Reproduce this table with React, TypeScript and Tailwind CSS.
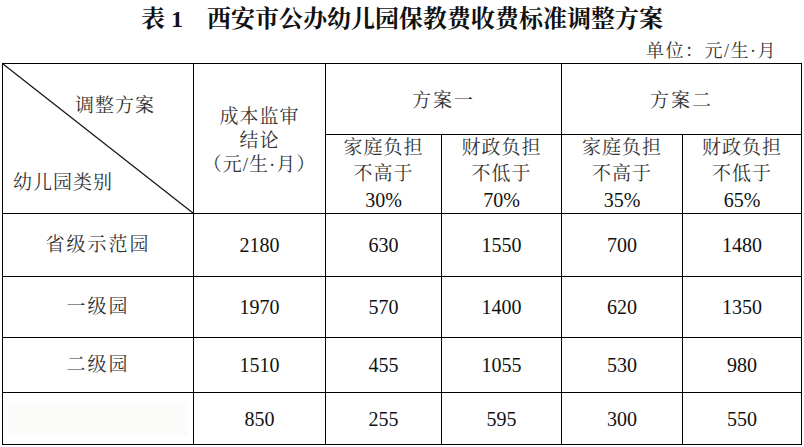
const serif = "font-['Liberation_Serif','Noto_Serif_CJK_SC','Noto_Sans_CJK_SC',serif]";

const rows = [
  { name: "省级示范园", cost: "2180", vals: ["630", "1550", "700", "1480"], h: "h-[63px]" },
  { name: "一级园", cost: "1970", vals: ["570", "1400", "620", "1350"], h: "h-[61px]" },
  { name: "二级园", cost: "1510", vals: ["455", "1055", "530", "980"], h: "h-[55px]" },
  { name: "", cost: "850", vals: ["255", "595", "300", "550"], h: "h-[52px]" },
];

const subHeads = [
  ["家庭负担", "不高于", "30%"],
  ["财政负担", "不低于", "70%"],
  ["家庭负担", "不高于", "35%"],
  ["财政负担", "不低于", "65%"],
];

const cell = "border border-black text-center align-middle p-0";

export default function App() {
  return (
    <div className={`w-[804px] h-[447px] bg-white overflow-hidden ${serif}`}>
      {/* 标题 */}
      <div className="pt-[5px] text-center text-[24px] leading-[28px] font-bold text-[#111]">
        表 1　西安市公办幼儿园保教费收费标准调整方案
      </div>
      <div className="mt-[5px] pr-[27px] text-right text-[18px] leading-[26px] tracking-[1.5px] text-[#333]">
        单位：元/生·月
      </div>

      <table className="ml-[2px] -mt-[1px] w-[799px] table-fixed border-collapse text-[#333]">
        <colgroup>
          <col className="w-[191px]" />
          <col className="w-[132px]" />
          <col className="w-[116px]" />
          <col className="w-[120px]" />
          <col className="w-[121px]" />
          <col className="w-[119px]" />
        </colgroup>
        <tbody>
          <tr>
            <td rowSpan={2} className={`${cell} relative`}>
              <svg className="absolute inset-0 w-full h-full" preserveAspectRatio="none" viewBox="0 0 100 100">
                <line x1="0" y1="0" x2="100" y2="100" stroke="#111" strokeWidth="1.3" vectorEffect="non-scaling-stroke" />
              </svg>
              <div className="relative h-[148px] flex flex-col justify-between text-[19px] leading-[24px] tracking-[1px]">
                <div className="self-end pr-[38px] pt-[29px]">调整方案</div>
                <div className="self-start pl-[10px] pb-[18px]">幼儿园类别</div>
              </div>
            </td>
            <td rowSpan={2} className={`${cell} text-[19px] leading-[24px] tracking-[1px]`}>
              <div className="pt-[4px]">成本监审</div>
              <div>结论</div>
              <div>（元/生·月）</div>
            </td>
            <td colSpan={2} className={`${cell} h-[71px] text-[19px] tracking-[2px]`}>
              <div className="pt-[4px]">方案一</div>
            </td>
            <td colSpan={2} className={`${cell} h-[71px] text-[19px] tracking-[2px]`}>
              <div className="pt-[4px]">方案二</div>
            </td>
          </tr>
          <tr>
            {subHeads.map((s, i) => (
              <td key={i} className={`${cell} h-[77px] text-[19px] leading-[26px] tracking-[1px]`}>
                <div>{s[0]}</div>
                <div>{s[1]}</div>
                <div className="text-[20px] tracking-normal text-[#111]">{s[2]}</div>
              </td>
            ))}
          </tr>
          {rows.map((r, i) => (
            <tr key={i}>
              <td className={`${cell} ${r.h} text-[19px] tracking-[2px]`}>
                {r.name ? (
                  r.name
                ) : (
                  <div className="mx-[5px] h-[35px] bg-[#fbfbfa]" />
                )}
              </td>
              <td className={`${cell} text-[20px] text-[#111]`}>{r.cost}</td>
              {r.vals.map((v, j) => (
                <td key={j} className={`${cell} text-[20px] text-[#111]`}>
                  {v}
                </td>
              ))}
            </tr>
          ))}
        </tbody>
      </table>
    </div>
  );
}
